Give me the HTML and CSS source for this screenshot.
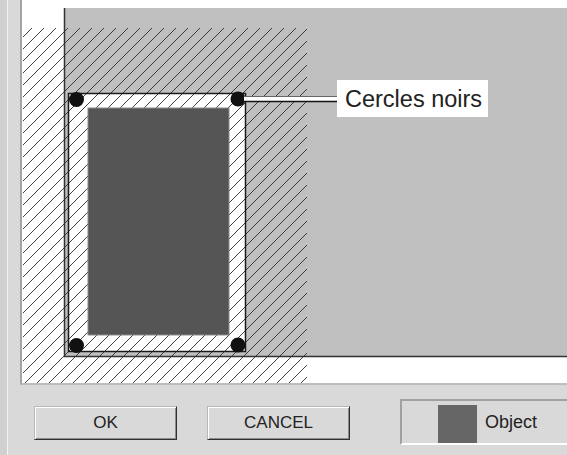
FILE: index.html
```html
<!DOCTYPE html>
<html lang="fr">
<head>
  <meta charset="UTF-8" />
  <meta name="viewport" content="width=device-width, initial-scale=1.0" />
  <title>Cercles noirs</title>
  <link rel="stylesheet" href="styles.css">
</head>
<body>
  <div class="window">
    <div class="edge"></div>
    <div class="dialog">
      <div class="view">
        <svg class="sketch" width="545" height="383" viewBox="22 0 545 383">
          <defs>
            <pattern id="hatch" patternUnits="userSpaceOnUse" width="12" height="12">
              <path d="M0 12 L12 0 M-2 2 L2 -2 M10 14 L14 10" stroke="#2a2a2a" stroke-width="0.9" />
            </pattern>
          </defs>
          <rect x="22" y="0" width="545" height="383" fill="#fff" />
          <!-- page -->
          <rect x="64" y="8" width="503" height="349" fill="#c0c0c0" />
          <path d="M64.5 8 V356.5 H567" fill="none" stroke="#333" stroke-width="1.5" />
          <!-- object -->
          <rect x="68.5" y="93.5" width="177" height="258" fill="#fff" />
          <rect x="23" y="28" width="284" height="355" fill="url(#hatch)" />
          <rect x="68.5" y="93.5" width="177" height="258" fill="none" stroke="#1a1a1a" stroke-width="1.5" />
          <rect x="88" y="108" width="141" height="227" fill="#555" stroke="#8c8c8c" stroke-width="1" />
          <circle cx="76.5" cy="99.5" r="7.5" fill="#111" />
          <circle cx="238" cy="99" r="7.5" fill="#111" />
          <circle cx="76.5" cy="345.5" r="7.5" fill="#111" />
          <circle cx="238" cy="345" r="7.5" fill="#111" />
          <!-- callout -->
          <rect x="244" y="96" width="94" height="6" fill="#fff" />
          <path d="M244 96.5 H338" stroke="#666" stroke-width="1" />
          <path d="M244 101.5 H338" stroke="#111" stroke-width="1.5" />
          <rect x="337" y="80" width="151" height="37" fill="#fff" />
          <text x="345" y="107" class="label">Cercles noirs</text>
        </svg>
      </div>
      <div class="actions">
        <button class="btn">OK</button>
        <button class="btn btn-cancel">CANCEL</button>
        <div class="legend">
          <span class="swatch"></span>
          <span class="legend-text">Object</span>
        </div>
      </div>
    </div>
  </div>
</body>
</html>
```

FILE: styles.css
```css
body {
  margin: 0;
  background-color: #d6d6d6;
  font-family: "Liberation Sans", Arial, sans-serif;
}
.window {
  display: flex;
  width: 567px;
  height: 455px;
  overflow: hidden;
}
.edge {
  width: 7px;
  flex-shrink: 0;
  background-color: #d0d0d0;
}
.dialog {
  flex: 1;
  min-width: 0;
  border-left: 1px solid #f2f2f2;
  padding-left: 12px;
  background-color: #d9d9d9;
  overflow: hidden;
}
.view {
  width: 545px;
  height: 383px;
  border-left: 2px solid #a4a4a4;
  border-bottom: 2px solid #bdbdbd;
}
.sketch {
  display: block;
}
.label {
  font-family: "Liberation Sans", Arial, sans-serif;
  font-size: 23.5px;
  fill: #222;
}
.actions {
  display: flex;
  align-items: center;
  padding: 6px 0 0 14px;
  height: 64px;
}
.btn {
  width: 143px;
  height: 34px;
  flex-shrink: 0;
  margin: 0;
  padding: 0;
  font-family: "Liberation Sans", Arial, sans-serif;
  font-size: 17px;
  color: #222;
  background-color: #d9d9d9;
  border: 1px solid;
  border-color: #b8b8b8 #303030 #303030 #b8b8b8;
  box-shadow: inset 1px 1px #fff, inset -1px -1px #8c8c8c;
}
.btn-cancel {
  margin-left: 30px;
}
.legend {
  display: flex;
  align-items: flex-end;
  flex-shrink: 0;
  width: 178px;
  height: 46px;
  margin-left: 50px;
  margin-top: -2px;
  box-sizing: border-box;
  border: 2px solid;
  border-color: #a0a0a0 #a0a0a0 #fff #a0a0a0;
  padding-left: 36px;
  background-color: #d9d9d9;
}
.swatch {
  width: 39px;
  height: 38px;
  background-color: #666;
}
.legend-text {
  align-self: center;
  margin-left: 8px;
  font-size: 18px;
  color: #222;
}
```
